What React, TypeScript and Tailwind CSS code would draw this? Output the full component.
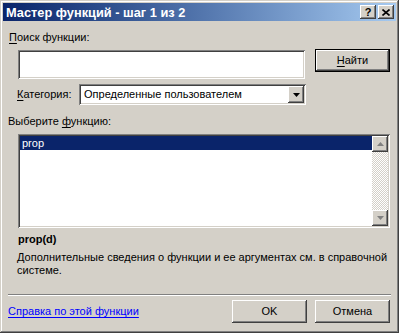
import React from 'react';

const FONT = "font-['Liberation_Sans',Arial,sans-serif]";

// Win2000-style 3D edges
const RAISED =
  'shadow-[inset_-1px_-1px_#404040,inset_1px_1px_#ffffff,inset_-2px_-2px_#808080,inset_2px_2px_#d4d0c8]';
const SUNKEN =
  'shadow-[inset_1px_1px_#808080,inset_-1px_-1px_#ffffff,inset_2px_2px_#404040,inset_-2px_-2px_#d4d0c8]';

function Key({ children }: { children: React.ReactNode }) {
  return <span className="underline underline-offset-[2px]">{children}</span>;
}

function Button({
  children,
  isDefault = false,
  className = '',
}: {
  children: React.ReactNode;
  isDefault?: boolean;
  className?: string;
}) {
  return (
    <div
      className={`w-[75px] h-[23px] bg-[#d4d0c8] ${isDefault ? 'border border-black' : ''} ${className}`}
    >
      <div
        className={`w-full h-full flex items-center justify-center text-[11px] text-black ${RAISED}`}
      >
        {children}
      </div>
    </div>
  );
}

function TitleButton({ children }: { children: React.ReactNode }) {
  return (
    <div
      className={`w-[16px] h-[14px] bg-[#d4d0c8] flex items-center justify-center text-[11px] font-bold leading-none text-black ${RAISED}`}
    >
      {children}
    </div>
  );
}

function ScrollArrow({ up }: { up: boolean }) {
  return (
    <div className={`w-[16px] h-[16px] bg-[#d4d0c8] flex items-center justify-center ${RAISED}`}>
      <svg width="7" height="4" viewBox="0 0 7 4">
        {up ? (
          <path d="M3.5 0 L7 4 L0 4 Z" fill="#808080" />
        ) : (
          <path d="M0 0 L7 0 L3.5 4 Z" fill="#808080" />
        )}
      </svg>
    </div>
  );
}

export default function App() {
  return (
    <div
      className={`relative w-[399px] h-[333px] bg-[#d4d0c8] ${FONT} text-[11px] leading-[13px] text-black shadow-[inset_-1px_-1px_#404040,inset_1px_1px_#d4d0c8,inset_-2px_-2px_#808080,inset_2px_2px_#ffffff] flex flex-col`}
    >
      {/* Title bar */}
      <div className="mx-[3px] mt-[3px] h-[18px] flex items-center bg-gradient-to-r from-[#0a246a] to-[#a6caf0] pl-[3px] pr-[2px]">
        <span className="text-white font-bold text-[12.8px]">Мастер функций - шаг 1 из 2</span>
        <div className="ml-auto flex gap-[2px]">
          <TitleButton>?</TitleButton>
          <TitleButton>
            <svg width="8" height="7" viewBox="0 0 8 7">
              <path d="M0.5 0.5 L7.5 6.5 M7.5 0.5 L0.5 6.5" stroke="#000" strokeWidth="1.6" />
            </svg>
          </TitleButton>
        </div>
      </div>

      {/* Search */}
      <div className="mt-[10px] ml-[9px]">
        <Key>П</Key>оиск функции:
      </div>
      <div className="mt-[5px] flex items-start">
        <div className={`ml-[18px] mt-[1px] w-[287px] h-[29px] bg-white ${SUNKEN}`} />
        <Button isDefault className="ml-[10px]">
          <span>
            <Key>Н</Key>айти
          </span>
        </Button>
      </div>

      {/* Category */}
      <div className="mt-[5px] flex items-center h-[21px]">
        <div className="w-[79px] pl-[17px]">
          <Key>К</Key>атегория:
        </div>
        <div className={`w-[227px] h-[21px] bg-white flex items-center p-[2px] ${SUNKEN}`}>
          <span className="pl-[3px] flex-1">Определенные пользователем</span>
          <div className={`w-[16px] h-[17px] bg-[#d4d0c8] flex items-center justify-center ${RAISED}`}>
            <svg width="7" height="4" viewBox="0 0 7 4">
              <path d="M0 0 L7 0 L3.5 4 Z" fill="#000" />
            </svg>
          </div>
        </div>
      </div>

      {/* Function list */}
      <div className="mt-[10px] ml-[8px]">
        Выберите <Key>ф</Key>ункцию:
      </div>
      <div className={`mt-[6px] ml-[18px] w-[372px] h-[94px] bg-white p-[2px] flex ${SUNKEN}`}>
        <div className="flex-1">
          <div className="h-[14px] bg-[#0a246a] text-white pl-[2px] leading-[14px]">prop</div>
        </div>
        <div className="w-[16px] flex flex-col [background:repeating-conic-gradient(#d4d0c8_0_25%,#ffffff_0_50%)_0_0/2px_2px]">
          <ScrollArrow up />
          <div className="flex-1" />
          <ScrollArrow up={false} />
        </div>
      </div>

      {/* Description */}
      <div className="mt-[5px] ml-[18px] font-bold">prop(d)</div>
      <div className="mt-[5px] ml-[17px] w-[372px]">
        Дополнительные сведения о функции и ее аргументах см. в справочной системе.
      </div>

      {/* Footer */}
      <div className="mt-auto mb-[10px]">
        <div className="mx-[8px] mb-[1px] h-[2px] border-t border-[#808080] border-b border-b-white" />
        <div className="mt-[4px] flex items-center">
          <span className="ml-[8px] text-[#0000ff] underline underline-offset-[2px]">
            Справка по этой функции
          </span>
          <Button className="ml-auto">OK</Button>
          <Button className="ml-[8px] mr-[9px]">Отмена</Button>
        </div>
      </div>
    </div>
  );
}
